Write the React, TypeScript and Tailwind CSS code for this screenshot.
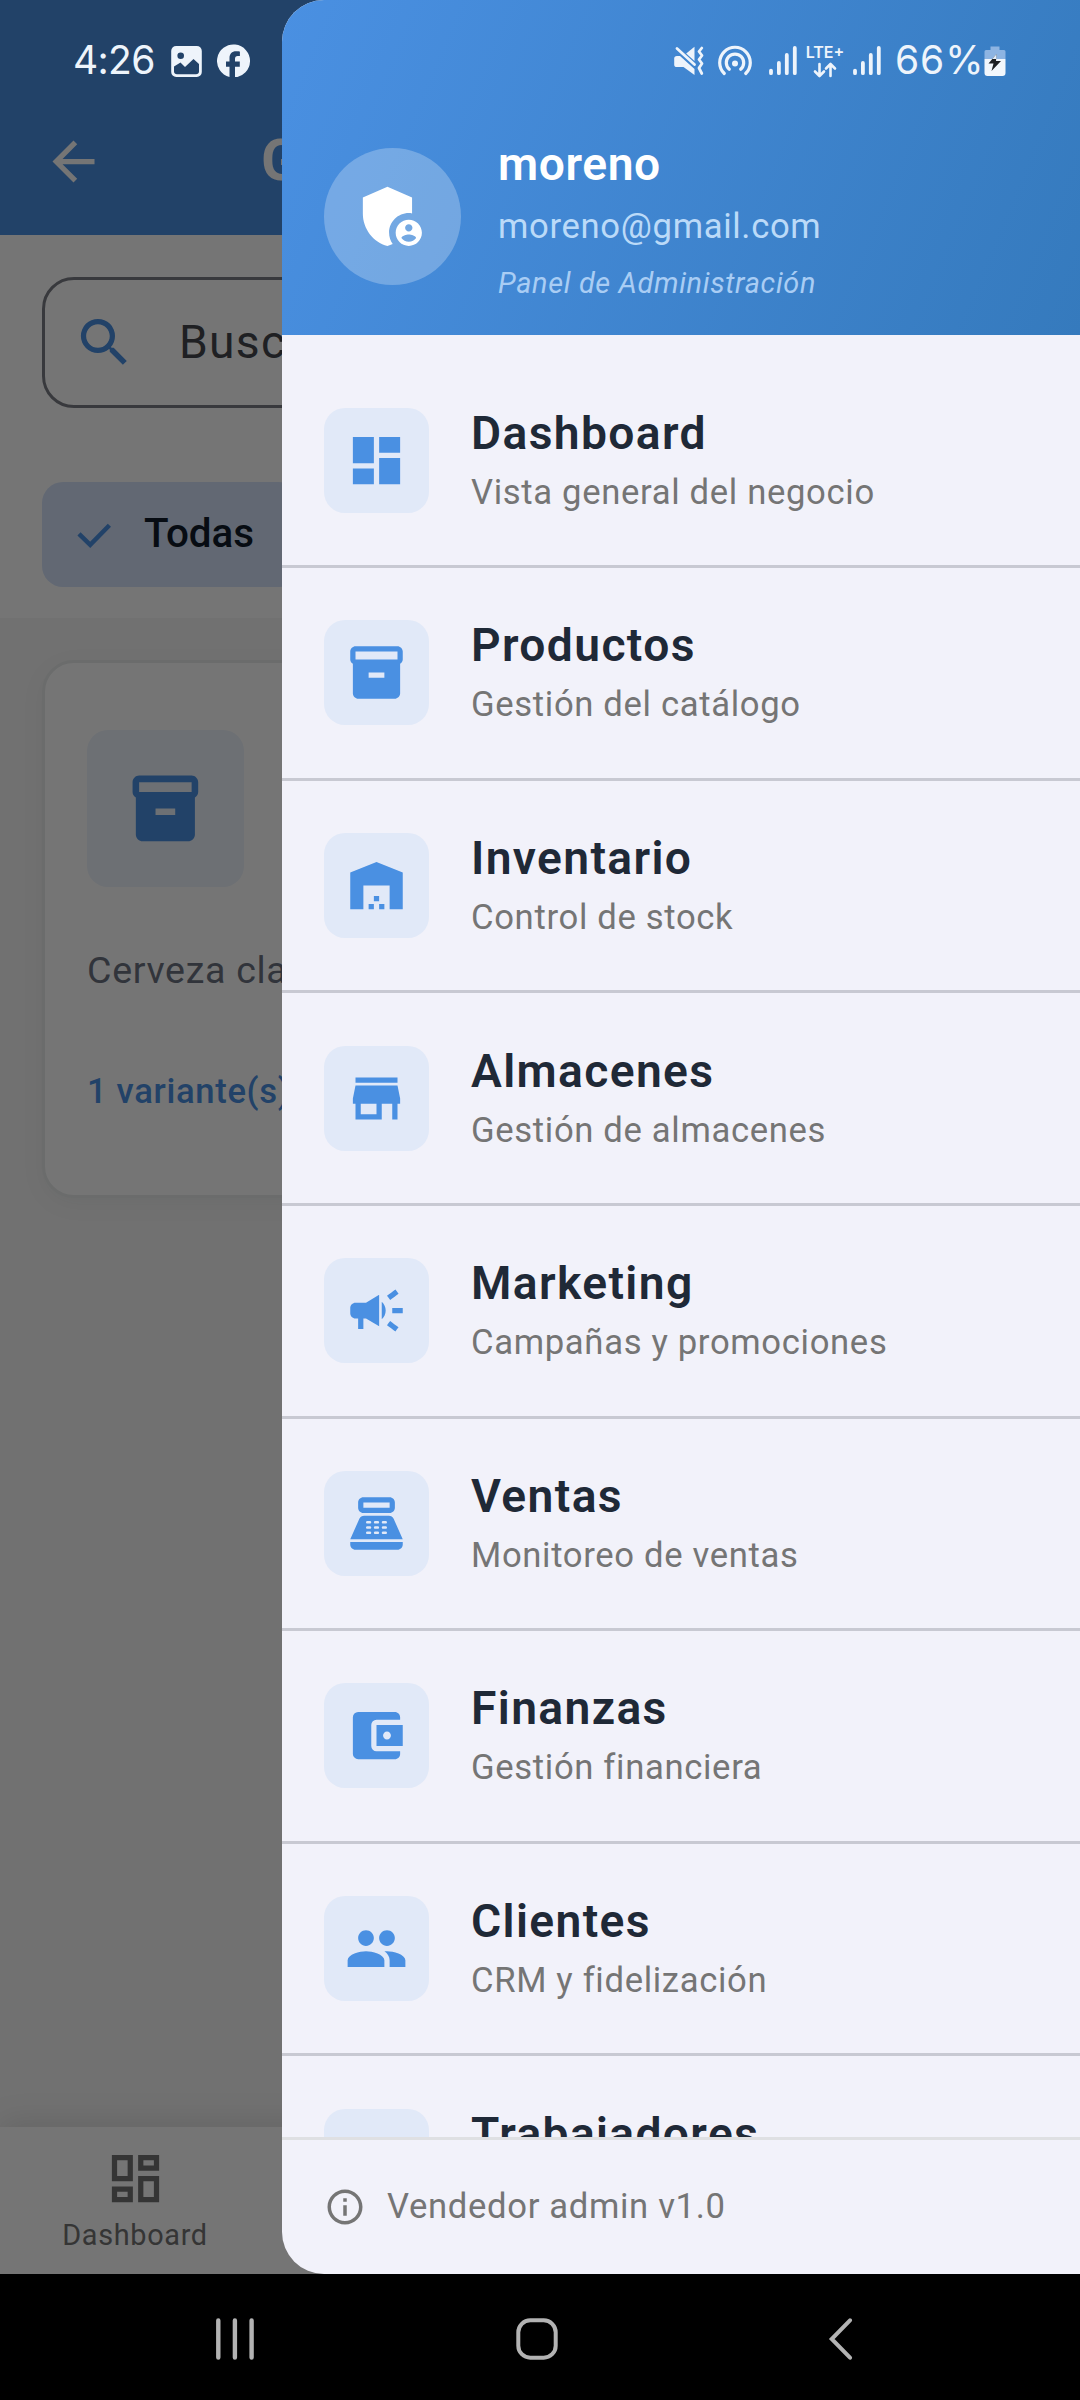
import type { IconType } from "react-icons";
import {
  MdAccountBalanceWallet,
  MdAdminPanelSettings,
  MdArrowBack,
  MdCampaign,
  MdDashboard,
  MdInfoOutline,
  MdInventory2,
  MdOutlineDashboard,
  MdPeople,
  MdPointOfSale,
  MdSearch,
  MdStore,
  MdWarehouse,
} from "react-icons/md";

type MenuEntry = { title: string; subtitle?: string; icon: IconType };

const menu: MenuEntry[] = [
  { title: "Dashboard", subtitle: "Vista general del negocio", icon: MdDashboard },
  { title: "Productos", subtitle: "Gestión del catálogo", icon: MdInventory2 },
  { title: "Inventario", subtitle: "Control de stock", icon: MdWarehouse },
  { title: "Almacenes", subtitle: "Gestión de almacenes", icon: MdStore },
  { title: "Marketing", subtitle: "Campañas y promociones", icon: MdCampaign },
  { title: "Ventas", subtitle: "Monitoreo de ventas", icon: MdPointOfSale },
  { title: "Finanzas", subtitle: "Gestión financiera", icon: MdAccountBalanceWallet },
  { title: "Clientes", subtitle: "CRM y fidelización", icon: MdPeople },
  { title: "Trabajadores", icon: MdPeople },
];

function SignalBars() {
  return (
    <svg className="h-[34px] w-[28px]" viewBox="0 0 28 34" stroke="currentColor" strokeWidth="3.8" strokeLinecap="round">
      <path d="M2 27.600v2.600M9.900 20v10.200M17.800 12v18.200M25.800 5v25.200" />
    </svg>
  );
}

function StatusBar() {
  return (
    <div className="absolute inset-x-0 top-0 flex h-[120px] items-center pl-[73px] font-['Inter',sans-serif] text-[39px] text-[#eef4fb]">
      <span className="w-[98px] tracking-[-0.670px]">4:26</span>
      <svg className="h-[34px] w-[31px]" viewBox="0 0 31 34" fill="currentColor">
        <path
          fillRule="evenodd"
          d="M5.500 3H25.500A5 5 0 0 1 30.800 8V29A5 5 0 0 1 25.800 34H5.200A5 5 0 0 1 .2 29V8A5 5 0 0 1 5.500 3ZM9.700 9.500A3.300 3.300 0 1 0 9.700 16.100A3.300 3.300 0 1 0 9.700 9.500ZM3 23.500V28.500A3 3 0 0 0 6 31.300H25A3 3 0 0 0 28 28.500V21L22.500 16L14 24L9.500 19.500Z"
        />
      </svg>
      <svg className="ml-[15px] h-[34px] w-[33px]" viewBox="0 0 33 34" fill="currentColor">
        <path d="M33 18.500A16.500 16.500 0 1 0 12.500 34V23.700H9V18.600H12.500V15.200C12.500 10.800 15 8.300 19 8.300C20.900 8.300 22.900 8.700 22.900 8.700V13H20.700C18.800 13 18 14.200 18 15.700V18.600H22.800V23.700H18V34.400A16.500 16.500 0 0 0 33 18.500Z" />
      </svg>
      <svg className="ml-[424px] h-[34px] w-[30px]" viewBox="0 0 30 34" fill="currentColor">
        <path d="M20.500 3.800V18L12.200 10.400Z" />
        <path d="M3 13H6L20.500 26V32L9.500 24H3A2.800 2.800 0 0 1 .2 21V16A2.800 2.800 0 0 1 3 13Z" />
        <path d="M3 5.500L20.500 21.500" stroke="currentColor" strokeWidth="2.800" strokeLinecap="round" />
        <path
          d="M27.800 5L25 8.500L28 12.500L25 16.500L28 20.500L25 25L27.800 30.500"
          fill="none"
          stroke="currentColor"
          strokeWidth="2.800"
          strokeLinecap="round"
          strokeLinejoin="round"
        />
      </svg>
      <svg className="ml-[14px] h-[34px] w-[34px]" viewBox="0 0 34 34" fill="none" stroke="currentColor" strokeWidth="3.200" strokeLinecap="round">
        <path d="M6.300 30.500A15.300 15.300 0 1 1 27.700 30.500" />
        <path d="M11.300 26.300A8.700 8.700 0 1 1 22.700 26.300" />
        <circle cx="17" cy="20.500" r="3" fill="currentColor" stroke="none" />
      </svg>
      <div className="ml-[17px] flex">
        <SignalBars />
      </div>
      <div className="ml-[9px] flex w-[38px] flex-col items-center pt-[1px]">
        <span className="text-[16px] leading-[17px] font-semibold">LTE+</span>
        <svg className="mt-[1px] h-[16px] w-[24px]" viewBox="0 0 24 16" fill="none" stroke="currentColor" strokeWidth="2.600" strokeLinecap="round" strokeLinejoin="round">
          <path d="M6.500 2v11.500M2 9.500l4.500 4.500L11 9.500M17.500 14V2.500M13 6.500L17.500 2L22 6.500" />
        </svg>
      </div>
      <div className="ml-[9px] flex">
        <SignalBars />
      </div>
      <span className="ml-[14px] w-[89px] tracking-[0.900px]">66%</span>
      <svg className="h-[34px] w-[22px]" viewBox="0 0 22 34">
        <path d="M6.500 3.500H15.500V7H20A1.500 1.500 0 0 1 21.500 8.500V16H.5V8.500A1.500 1.500 0 0 1 2 7H6.500Z" fill="#8db4e2" />
        <path d="M.5 16H21.500V30A3 3 0 0 1 18.500 33H3.500A3 3 0 0 1 .5 30Z" fill="#f2f7fc" />
        <path d="M12.500 11L4.500 20.500H9.500L7.500 28L17 18H12Z" fill="#1d2023" />
        <path d="M12.500 11L8.200 16H12.300Z" fill="#e3edf8" />
      </svg>
    </div>
  );
}

function CatalogPage() {
  return (
    <div className="flex h-full w-full flex-col bg-[#f6f6f6]">
      <header className="flex h-[235px] shrink-0 items-start bg-[#4a90e2] pl-[42px] text-white">
        <MdArrowBack className="mt-[130px] size-[63px]" />
        <h1 className="mt-[125px] ml-[156px] text-[57.750px] leading-[70px] font-bold">Gestión</h1>
      </header>

      <section className="flex h-[383px] shrink-0 flex-col bg-white px-[42px] pt-[42px]">
        <div className="flex h-[131px] shrink-0 items-center rounded-[32px] border-[3px] border-[#7b7d85] pl-[28px]">
          <MdSearch className="size-[63px] text-[#4a90e2]" />
          <span className="ml-[43px] text-[46.200px] tracking-[1.300px] text-[#44474e]">Buscar</span>
        </div>
        <div className="mt-[74px] flex h-[105px] w-[258px] items-center rounded-[21px] bg-[#d5e3fb] pl-[29px]">
          <svg className="size-[45px] text-[#4a90e2]" viewBox="0 0 45 45" fill="none" stroke="currentColor" strokeWidth="4.500">
            <path d="M8 21.800L19.200 32.800L38.400 13.200" />
          </svg>
          <span className="ml-[28px] text-[40.425px] font-medium text-[#101c2b]">Todas</span>
        </div>
      </section>

      <main className="flex-1 px-[42px] pt-[42px]">
        <article className="flex h-[538px] flex-col rounded-[32px] border-[3px] border-[#e9eceb] bg-white px-[42px] pt-[67px] shadow-[0_6px_24px_rgba(20,40,30,0.05)]">
          <div className="flex size-[157px] items-center justify-center rounded-[21px] bg-[#edf4fc] text-[#4a90e2]">
            <MdInventory2 className="size-[78.750px]" />
          </div>
          <p className="mt-[58px] text-[37.540px] leading-[50px] tracking-[0.700px] text-[#6b7280]">Cerveza clara</p>
          <p className="mt-[73px] text-[34.650px] leading-[46px] font-medium tracking-[0.660px] text-[#4a90e2]">1 variante(s)</p>
        </article>
      </main>

      <nav className="flex h-[147px] shrink-0 bg-white shadow-[0_-6px_30px_rgba(0,0,0,0.100)]">
        <div className="flex w-[270px] flex-col items-center pt-[20px] text-[#757575]">
          <MdOutlineDashboard className="size-[63px]" />
          <span className="mt-[6px] text-[28.875px] leading-[38px] tracking-[0.660px]">Dashboard</span>
        </div>
      </nav>
    </div>
  );
}

function MenuItem({ title, subtitle, icon: Icon }: MenuEntry) {
  return (
    <li>
      <div className="flex h-[209.625px] items-center pl-[42px]">
        <div className="flex size-[105px] items-center justify-center rounded-[21px] bg-[#e1e9f8] text-[#4a90e2]">
          <Icon className="size-[63px]" />
        </div>
        <div className="ml-[42px] h-[109px]">
          <p className="text-[46.200px] leading-[54px] font-semibold tracking-[1.370px] text-[#1f2937]">{title}</p>
          {subtitle && (
            <p className="mt-[9px] text-[34.650px] leading-[46px] tracking-[0.660px] text-[#757575]">{subtitle}</p>
          )}
        </div>
      </div>
      <div className="h-[3px] bg-[#c8c9d2]" />
    </li>
  );
}

function Drawer() {
  return (
    <aside className="absolute inset-y-0 right-0 flex w-[798px] flex-col overflow-hidden rounded-l-[42px] bg-[#f2f2fa]">
      <div className="flex h-[334.700px] shrink-0 items-start bg-linear-[112.75deg] from-[#4a90e2] to-[#357abd] pt-[137px] pl-[42px]">
        <div className="mt-[11px] flex size-[137px] items-center justify-center rounded-full bg-white/25 text-white">
          <MdAdminPanelSettings className="size-[78.750px]" />
        </div>
        <div className="ml-[37px]">
          <p className="text-[46.200px] leading-[54px] font-semibold tracking-[0.600px] text-white">moreno</p>
          <p className="mt-[12px] text-[34.650px] leading-[46px] tracking-[0.660px] text-[#bbdaf8]">moreno@gmail.com</p>
          <p className="mt-[15px] text-[28.875px] leading-[38px] tracking-[0.660px] text-[#a9cdf4] italic">Panel de Administración</p>
        </div>
      </div>

      <ul className="min-h-0 flex-1 overflow-hidden pt-[20.700px]">
        {menu.map((entry) => (
          <MenuItem key={entry.title} {...entry} />
        ))}
      </ul>

      <footer className="flex h-[137px] shrink-0 items-center border-t-[3px] border-[#dfe0e3] pl-[42px] text-[#757575]">
        <MdInfoOutline className="size-[42px]" />
        <span className="ml-[21px] text-[34.650px] tracking-[0.660px]">Vendedor admin v1.0</span>
      </footer>
    </aside>
  );
}

function SystemNavigation() {
  return (
    <div className="flex h-[126px] shrink-0 items-center bg-black pt-[4px] pl-[214px] text-[#b3b3b3]">
      <svg className="size-[42px]" viewBox="0 0 42 42" fill="none" stroke="currentColor" strokeWidth="4.400" strokeLinecap="round">
        <path d="M4.300 2.500v37M20.900 2.500v37M37.600 2.500v37" />
      </svg>
      <svg className="ml-[260px] size-[42px]" viewBox="0 0 42 42" fill="none" stroke="currentColor" strokeWidth="4">
        <rect x="2.300" y="2.300" width="37.400" height="37.400" rx="12" />
      </svg>
      <svg className="ml-[261px] size-[42px]" viewBox="0 0 42 42" fill="none" stroke="currentColor" strokeWidth="4" strokeLinecap="round" strokeLinejoin="miter">
        <path d="M31 2.300L12.700 21L31 39.700" />
      </svg>
    </div>
  );
}

export default function App() {
  return (
    <div className="flex h-[2400px] w-[1080px] flex-col overflow-hidden bg-black font-['Roboto',sans-serif] whitespace-nowrap">
      <div className="relative h-[2274px] shrink-0 overflow-hidden">
        <CatalogPage />
        <div className="absolute inset-0 bg-black/54" />
        <Drawer />
        <StatusBar />
      </div>
      <SystemNavigation />
    </div>
  );
}
